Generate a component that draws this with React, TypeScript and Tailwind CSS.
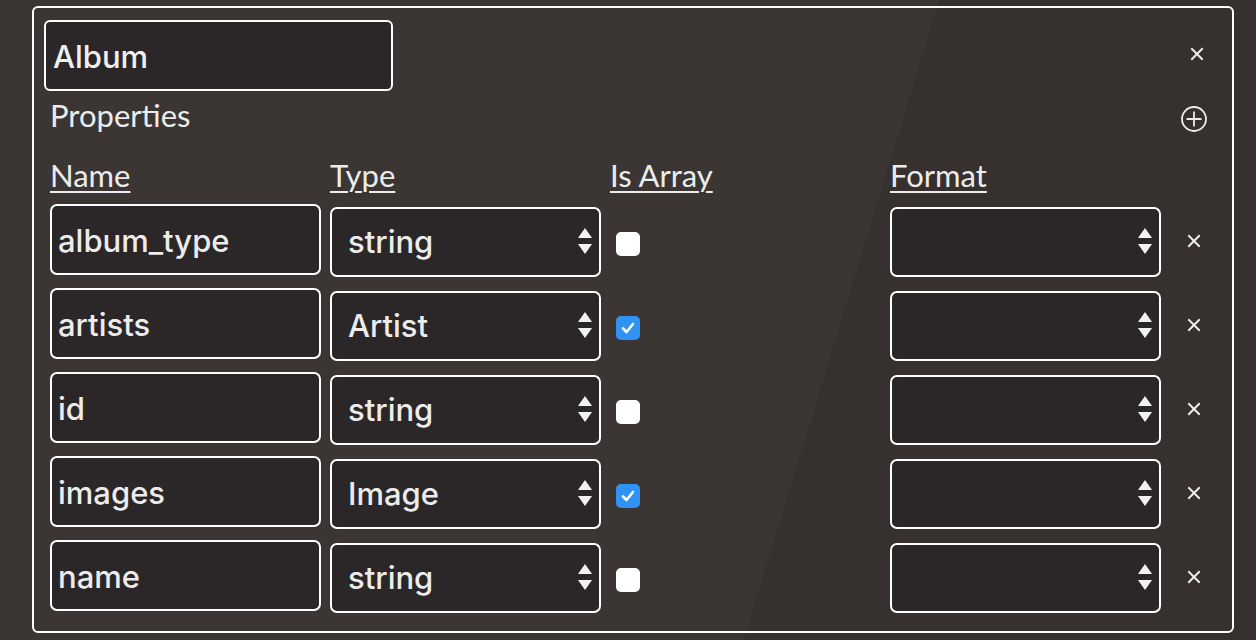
import React from "react";

type Row = { name: string; type: string; isArray: boolean };

const rows: Row[] = [
  { name: "album_type", type: "string", isArray: false },
  { name: "artists", type: "Artist", isArray: true },
  { name: "id", type: "string", isArray: false },
  { name: "images", type: "Image", isArray: true },
  { name: "name", type: "string", isArray: false },
];

function Arrows() {
  return (
    <svg width="16" height="30" viewBox="0 0 16 30" className="shrink-0">
      <polygon points="1,11 8,1 15,11" fill="#f2f2f2" />
      <polygon points="1,17 15,17 8,27" fill="#f2f2f2" />
    </svg>
  );
}

function Close() {
  return (
    <svg width="14" height="14" viewBox="0 0 14 14">
      <path d="M2 2 L12 12 M12 2 L2 12" stroke="#ededed" strokeWidth="2" strokeLinecap="square" />
    </svg>
  );
}

function Select({ value }: { value: string }) {
  return (
    <div className="mt-[3px] flex h-[70px] w-[271px] items-center justify-between rounded-[7px] border-2 border-white bg-[#2b2728] pl-[16px] pr-[6px]">
      <span className="font-['Inter',sans-serif] text-[31px] font-medium text-[#ececec]">{value}</span>
      <Arrows />
    </div>
  );
}

function Checkbox({ checked }: { checked: boolean }) {
  return checked ? (
    <div className="flex h-[24px] w-[24px] items-center justify-center rounded-[5px] bg-[#3092f5]">
      <svg width="18" height="18" viewBox="0 0 18 18">
        <path d="M4 9.5 L7.5 13 L14 5" stroke="#ffffff" strokeWidth="2.6" fill="none" strokeLinecap="round" strokeLinejoin="round" />
      </svg>
    </div>
  ) : (
    <div className="h-[24px] w-[24px] rounded-[5px] bg-white" />
  );
}

export default function App() {
  return (
    <div className="h-[640px] w-full overflow-hidden bg-[linear-gradient(107deg,#3b3633_64.7%,#36312e_64.7%)] pl-[32px] pt-[6px]">
      <div className="flex h-[627px] w-[1202px] flex-col rounded-[6px] border-2 border-white">
        <div className="ml-[10px] mt-[12px] flex items-center">
          <div className="flex h-[71px] w-[349px] items-center rounded-[6px] border-2 border-white bg-[#2b2728] pl-[7px] pt-[3px]">
            <span className="font-['Inter',sans-serif] text-[31px] font-medium text-[#f0f0f0]">Album</span>
          </div>
          <div className="ml-auto mr-[28px] mt-[-3px] flex">
            <Close />
          </div>
        </div>

        <div className="ml-[16px] mt-[6px] flex items-center">
          <span className="font-['Lato',sans-serif] text-[31px] leading-[37px] text-[#ececec]">Properties</span>
          <svg width="28" height="28" viewBox="0 0 28 28" className="ml-auto mr-[24px] mt-[6px]">
            <circle cx="14" cy="14" r="12" stroke="#ececec" strokeWidth="1.8" fill="none" />
            <path d="M14 6.5 V21.5 M6.5 14 H21.5" stroke="#ececec" strokeWidth="1.8" />
          </svg>
        </div>

        <div className="ml-[16px] mt-[23px] grid grid-cols-[271px_271px_271px_271px] gap-x-[9px]">
          {["Name", "Type", "Is Array", "Format"].map((h) => (
            <span
              key={h}
              className="font-['Lato',sans-serif] text-[31px] leading-[37px] text-[#ececec] underline decoration-[2px] underline-offset-[4px]"
            >
              {h}
            </span>
          ))}
        </div>

        <div className="ml-[16px] mt-[10px] flex flex-col gap-[11px]">
          {rows.map((r) => (
            <div key={r.name} className="flex items-start gap-x-[9px]">
              <div className="flex h-[71px] w-[271px] items-center rounded-[7px] border-2 border-white bg-[#2b2728] pl-[6px] pt-[4px]">
                <span className="font-['Inter',sans-serif] text-[31px] font-medium text-[#ececec]">{r.name}</span>
              </div>
              <Select value={r.type} />
              <div className="flex h-[71px] w-[271px] items-center pl-[6px] pt-[8px]">
                <Checkbox checked={r.isArray} />
              </div>
              <Select value="" />
              <div className="ml-[17px] mt-[30px] flex">
                <Close />
              </div>
            </div>
          ))}
        </div>
      </div>
    </div>
  );
}
